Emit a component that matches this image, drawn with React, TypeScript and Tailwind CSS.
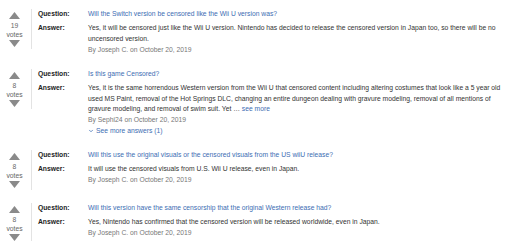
import { ChevronDown } from 'lucide-react';

const items = [
  {
    votes: 19,
    question: 'Will the Switch version be censored like the Wii U version was?',
    answer:
      'Yes, it will be censored just like the Wii U version. Nintendo has decided to release the censored version in Japan too, so there will be no uncensored version.',
    by: 'Joseph C.',
  },
  {
    votes: 8,
    question: 'Is this game Censored?',
    answer:
      'Yes, it is the same horrendous Western version from the Wii U that censored content including altering costumes that look like a 5 year old used MS Paint, removal of the Hot Springs DLC, changing an entire dungeon dealing with gravure modeling, removal of all mentions of gravure modeling, and removal of swim suit. Yet …',
    by: 'Sephi24',
    more: true,
  },
  {
    votes: 8,
    question: 'Will this use the original visuals or the censored visuals from the US wiiU release?',
    answer: 'It will use the censored visuals from U.S. Wii U release, even in Japan.',
    by: 'Joseph C.',
  },
  {
    votes: 8,
    question: 'Will this version have the same censorship that the original Western release had?',
    answer: 'Yes, Nintendo has confirmed that the censored version will be released worldwide, even in Japan.',
    by: 'Joseph C.',
  },
];

function Arrow({ down }: { down?: boolean }) {
  return (
    <svg width="11" height="7" viewBox="0 0 11 7" className="block">
      {down ? (
        <polygon points="0,0 11,0 5.5,7" fill="#8a8a8a" />
      ) : (
        <polygon points="5.5,0 11,7 0,7" fill="#8a8a8a" />
      )}
    </svg>
  );
}

export default function App() {
  return (
    <div
      className="w-[512px] h-[241px] bg-white overflow-hidden pt-[9px] text-[6.75px] leading-[10.75px] text-[#333]"
      style={{ fontFamily: '"Liberation Sans", Arial, sans-serif' }}
    >
      {items.map((item, i) => (
        <div key={i} className="flex mb-[13px]">
          <div className="w-[32px] shrink-0 self-start flex flex-col items-center border-r border-[#e3e3e3] pr-[2px] pt-[3px] pb-[2px]">
            <Arrow />
            <div className="mt-[2px] leading-[9px] text-[#666]">{item.votes}</div>
            <div className="leading-[9px] text-[#666]">votes</div>
            <div className="mt-[1px]">
              <Arrow down />
            </div>
          </div>
          <div className="flex-1 pl-[6px] pr-[7px]">
            <div className="flex mb-[3.5px]">
              <div className="w-[50px] shrink-0 font-bold text-[#222]">Question:</div>
              <div className="text-[#3d6db3]">{item.question}</div>
            </div>
            <div className="flex">
              <div className="w-[50px] shrink-0 font-bold text-[#222]">Answer:</div>
              <div>
                <div>
                  {item.answer}
                  {item.more && <span className="text-[#3d6db3]"> see more</span>}
                </div>
                <div className="text-[#777]">By {item.by} on October 20, 2019</div>
                {item.more && (
                  <div className="text-[#3d6db3] flex items-center gap-[2px]">
                    <ChevronDown className="w-[6px] h-[6px]" strokeWidth={3} />
                    See more answers (1)
                  </div>
                )}
              </div>
            </div>
          </div>
        </div>
      ))}
    </div>
  );
}
